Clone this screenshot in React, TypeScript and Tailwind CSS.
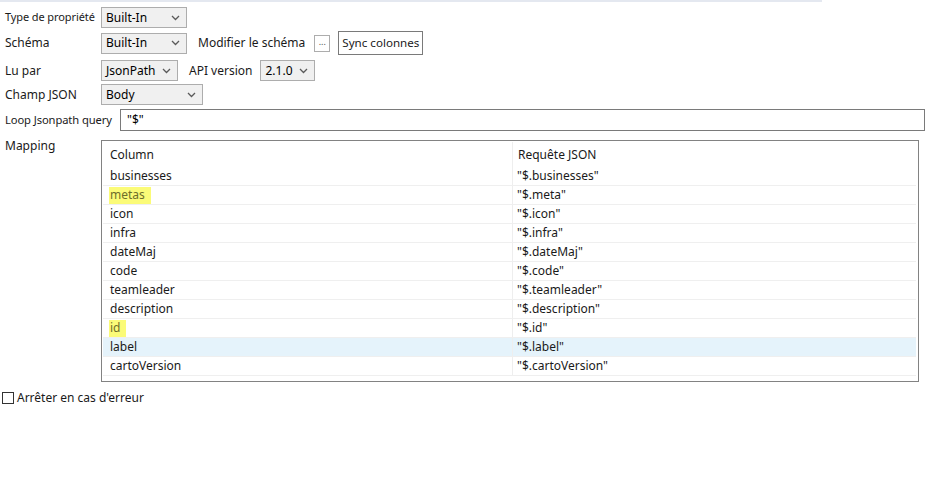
import React from "react";

const font = { fontFamily: '"Noto Sans", "Open Sans", sans-serif' };

function Chevron() {
  return (
    <svg width="9" height="6" viewBox="0 0 9 6" className="shrink-0">
      <path d="M1 1 L4.5 4.5 L8 1" fill="none" stroke="#5a5a5a" strokeWidth="1.3" />
    </svg>
  );
}

function Combo({ value, w }: { value: string; w: string }) {
  return (
    <div
      className={`flex items-center justify-between h-[21px] border border-[#adadad] bg-[#f0f0f0] pl-[4px] pr-[6px] text-[12px] text-[#000] ${w}`}
    >
      <span className="leading-none">{value}</span>
      <Chevron />
    </div>
  );
}

const rows: { c: string; q: string; hl?: boolean; sel?: boolean }[] = [
  { c: "businesses", q: '"$.businesses"' },
  { c: "metas", q: '"$.meta"', hl: true },
  { c: "icon", q: '"$.icon"' },
  { c: "infra", q: '"$.infra"' },
  { c: "dateMaj", q: '"$.dateMaj"' },
  { c: "code", q: '"$.code"' },
  { c: "teamleader", q: '"$.teamleader"' },
  { c: "description", q: '"$.description"' },
  { c: "id", q: '"$.id"', hl: true },
  { c: "label", q: '"$.label"', sel: true },
  { c: "cartoVersion", q: '"$.cartoVersion"' },
];

export default function App() {
  return (
    <div className="w-[930px] h-[485px] bg-white relative text-[12px] text-[#1a1a1a] whitespace-nowrap" style={font}>
      <div className="h-[2px] w-[822px] bg-[#e4e8f0]" />
      <div className="flex flex-col pl-[5px] pt-[5px]">
        <div className="flex items-center h-[21px]">
          <div className="w-[96px] text-[11px] tracking-[-0.1px]">Type de propriété</div>
          <Combo value="Built-In" w="w-[86px]" />
        </div>
        <div className="flex items-center h-[24px] mt-[3px]">
          <div className="w-[96px]">Schéma</div>
          <Combo value="Built-In" w="w-[86px]" />
          <div className="ml-[11px]">Modifier le schéma</div>
          <div className="ml-[9px] w-[16px] h-[17px] border border-[#adadad] bg-white flex items-center justify-center text-[9px] text-[#555] leading-none pb-[3px]">
            ...
          </div>
          <div className="ml-[8px] h-[24px] px-[3px] border border-[#7a7a7a] bg-white flex items-center text-[11.6px]">
            Sync colonnes
          </div>
        </div>
        <div className="flex items-center h-[21px] mt-[5px]">
          <div className="w-[96px]">Lu par</div>
          <Combo value="JsonPath" w="w-[77px]" />
          <div className="ml-[11px]">API version</div>
          <div className="ml-[8px]">
            <Combo value="2.1.0" w="w-[55px]" />
          </div>
        </div>
        <div className="flex items-center h-[21px] mt-[3px]">
          <div className="w-[96px]">Champ JSON</div>
          <Combo value="Body" w="w-[102px]" />
        </div>
        <div className="flex items-center h-[22px] mt-[4px]">
          <div className="w-[115px] text-[11.2px] tracking-[-0.1px]">Loop Jsonpath query</div>
          <div className="w-[805px] h-[22px] border border-[#7a7a7a] bg-white flex items-center pl-[6px] text-[#000]">
            "$"
          </div>
        </div>
        <div className="flex mt-[9px]">
          <div className="w-[96px] leading-[12px]">Mapping</div>
          <div className="w-[818px] h-[242px] border border-[#828282] bg-white flex flex-col pl-[1px] pt-[1px] pr-[2px]">
            <div className="flex h-[25px] items-center">
              <div className="w-[410px] h-full pl-[7px] flex items-center border-r border-[#eeeeee]">Column</div>
              <div className="flex-1 h-full pl-[5px] flex items-center">Requête JSON</div>
            </div>
            {rows.map((r) => (
              <div
                key={r.c}
                className={`flex h-[19px] items-center border-b border-[#efefef] ${r.sel ? "bg-[#e5f3fb]" : ""}`}
              >
                <div className="w-[410px] h-full pl-[6px] flex items-center border-r border-[#eeeeee]">
                  {r.hl ? (
                    <span className="bg-[#fbfb78] text-[#6e6e2a] pl-[1px] pr-[6px] h-[17px] flex items-center">
                      {r.c}
                    </span>
                  ) : (
                    <span className="pl-[1px]">{r.c}</span>
                  )}
                </div>
                <div className="flex-1 h-full pl-[4px] flex items-center">{r.q}</div>
              </div>
            ))}
          </div>
        </div>
        <div className="flex items-center mt-[7px] -ml-[3px]">
          <div className="w-[12px] h-[12px] border border-[#333333] bg-white" />
          <div className="ml-[3px]">Arrêter en cas d'erreur</div>
        </div>
      </div>
    </div>
  );
}
